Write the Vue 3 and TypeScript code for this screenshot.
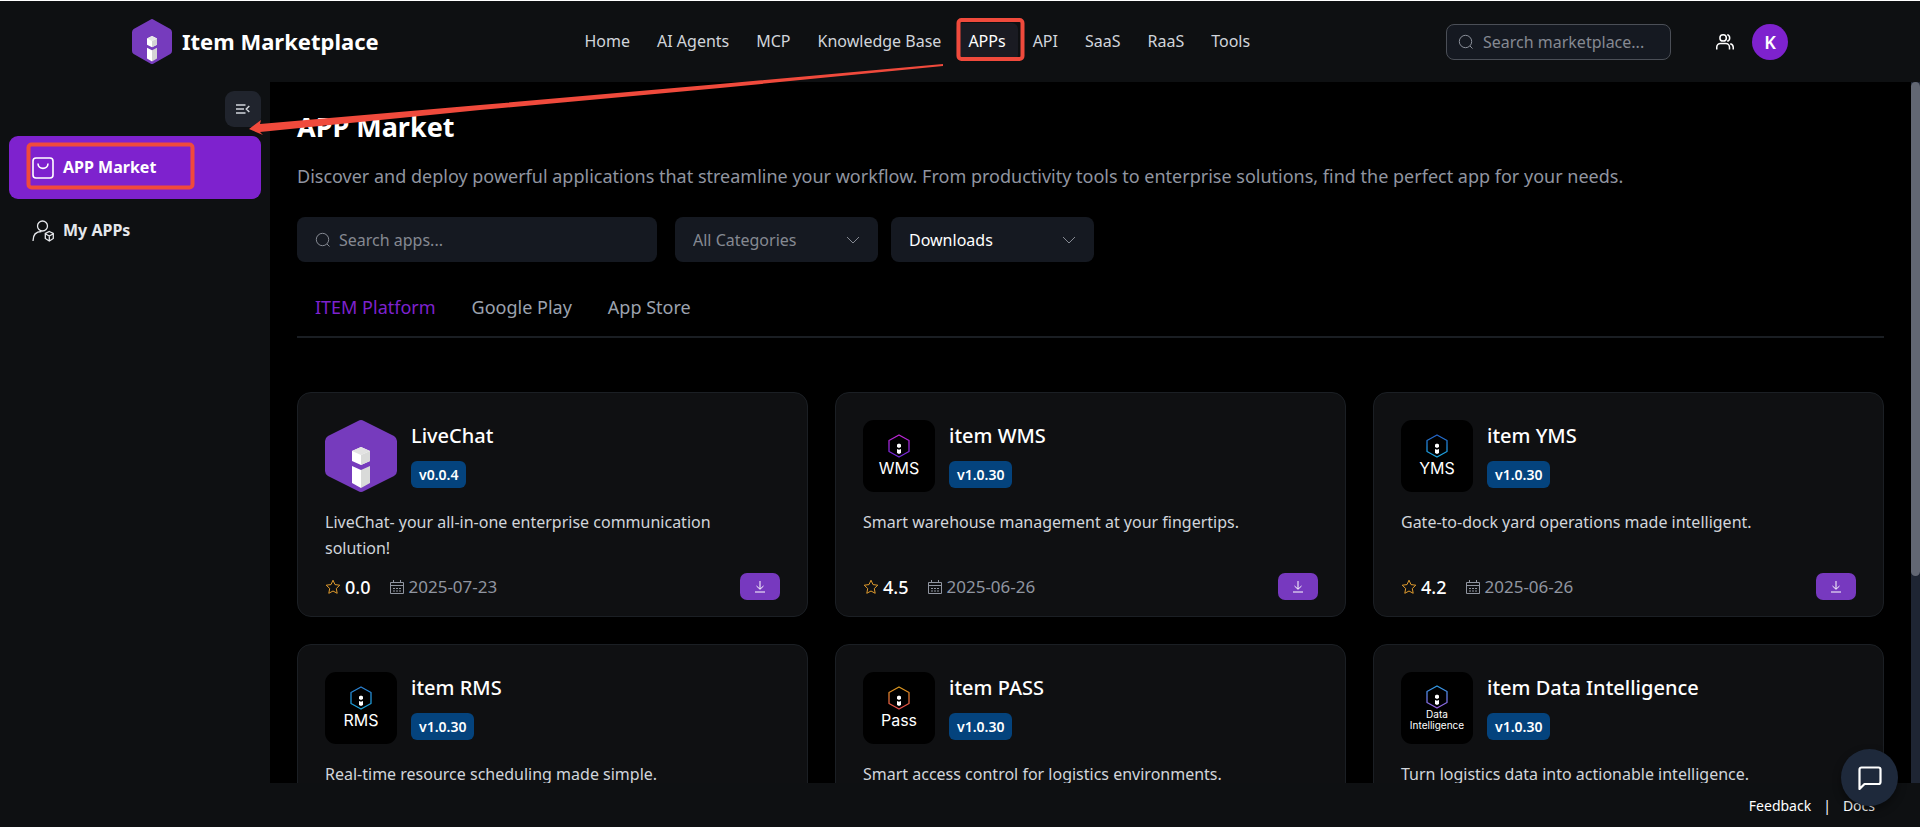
<script setup lang="ts">
import { ref } from 'vue'

interface MarketApp {
  name: string
  version: string
  description: string
  rating?: string
  date?: string
  label: string[]
  colors: [string, string]
}

const navItems = ['Home', 'AI Agents', 'MCP', 'Knowledge Base', 'APPs', 'API', 'SaaS', 'RaaS', 'Tools']
const tabs = ['ITEM Platform', 'Google Play', 'App Store']
const activeTab = ref('ITEM Platform')
const siteQuery = ref('')
const appQuery = ref('')
const category = ref('all')
const sortBy = ref('downloads')

const apps: MarketApp[] = [
  { name: 'LiveChat', version: 'v0.0.4', description: 'LiveChat- your all-in-one enterprise communication solution!', rating: '0.0', date: '2025-07-23', label: [], colors: ['#763bbd', '#763bbd'] },
  { name: 'item WMS', version: 'v1.0.30', description: 'Smart warehouse management at your fingertips.', rating: '4.5', date: '2025-06-26', label: ['WMS'], colors: ['#c026d3', '#6d28d9'] },
  { name: 'item YMS', version: 'v1.0.30', description: 'Gate-to-dock yard operations made intelligent.', rating: '4.2', date: '2025-06-26', label: ['YMS'], colors: ['#2563c9', '#1ba8e0'] },
  { name: 'item RMS', version: 'v1.0.30', description: 'Real-time resource scheduling made simple.', label: ['RMS'], colors: ['#2b7fd0', '#1aa3d8'] },
  { name: 'item PASS', version: 'v1.0.30', description: 'Smart access control for logistics environments.', label: ['Pass'], colors: ['#d99a1c', '#e5484d'] },
  { name: 'item Data Intelligence', version: 'v1.0.30', description: 'Turn logistics data into actionable intelligence.', label: ['Data', 'Intelligence'], colors: ['#2e9be6', '#9a5fe0'] },
]
</script>

<template>
  <div class="shell">
    <header class="topbar">
      <a class="brand" href="#">
        <svg class="brand-mark" viewBox="0 0 72 72" preserveAspectRatio="none" aria-hidden="true">
          <path d="M33 1Q36-1 39 1L69 16Q72 18 72 21V51Q72 54 69 56L39 71Q36 73 33 71L3 56Q0 54 0 51V21Q0 18 3 16Z" fill="#763bbd" />
          <path d="M27 31L36 27L45 31V41L36 45L27 41Z" fill="#fff" />
          <path d="M36 35L45 31V41L36 45Z" fill="#d4d4d4" />
          <path d="M27 31L36 27L45 31L36 35Z" fill="#e6e6e6" />
          <path d="M27 46L36 50V68L27 63Z" fill="#fff" />
          <path d="M36 50L45 46V63L36 68Z" fill="#d4d4d4" />
        </svg>
        <span>Item Marketplace</span>
      </a>
      <nav class="nav" aria-label="Main">
        <a v-for="item in navItems" :key="item" href="#" :class="{ current: item === 'APPs' }">{{ item }}</a>
      </nav>
      <div class="account">
        <label class="site-search">
          <svg viewBox="0 0 16 16" aria-hidden="true"><circle cx="7.5" cy="7.5" r="6.2" /><path d="M12 12L14.500 14.500" /></svg>
          <input v-model="siteQuery" type="text" placeholder="Search marketplace..." aria-label="Search marketplace" />
        </label>
        <button class="people" type="button" aria-label="Team">
          <svg viewBox="0 0 24 24" aria-hidden="true"><path d="M1 22v-3a5 5 0 0 1 5-5h7a5 5 0 0 1 5 5v3M15 2.200a4.600 4.600 0 0 1 0 8.800M19 14.200a5 5 0 0 1 4 4.800v3" /><circle cx="9.500" cy="6.500" r="4.300" /></svg>
        </button>
        <button class="avatar" type="button">K</button>
      </div>
    </header>

    <aside class="sidebar">
      <button class="collapse" type="button" aria-label="Collapse sidebar">
        <svg viewBox="0 0 14 10" aria-hidden="true"><path d="M0 1H9.500M0 5H8M0 9H9.500M13.300 2L10.300 5L13.300 8" /></svg>
      </button>
      <a class="side-link selected" href="#">
        <svg viewBox="0 0 22 22" aria-hidden="true"><rect x="1" y="1" width="20" height="20" rx="3" /><path d="M6 6.500C6 13 16 13 16 6.500" /></svg>
        <span>APP Market</span>
      </a>
      <a class="side-link" href="#">
        <svg class="thin" viewBox="0 0 22 22" aria-hidden="true"><circle cx="10.500" cy="6" r="5" /><path d="M1 21C1 15 4 11.500 9.500 11.500M17.300 11.500L21.300 13.500V18.500L17.300 21L13.300 18.500V13.500ZM13.300 13.800L17.300 16L21.300 13.800M17.300 16V21" /></svg>
        <span>My APPs</span>
      </a>
    </aside>

    <main class="content">
      <h1>APP Market</h1>
      <p class="lead">Discover and deploy powerful applications that streamline your workflow. From productivity tools to enterprise solutions, find the perfect app for your needs.</p>

      <div class="filters">
        <label class="field search">
          <svg viewBox="0 0 16 16" aria-hidden="true"><circle cx="7.5" cy="7.5" r="6.2" /><path d="M12 12L14.500 14.500" /></svg>
          <input v-model="appQuery" type="text" placeholder="Search apps..." aria-label="Search apps" />
        </label>
        <label class="field muted">
          <select v-model="category" aria-label="Category"><option value="all">All Categories</option></select>
          <svg viewBox="0 0 14 14" aria-hidden="true"><path d="M1 4L7 10L13 4" /></svg>
        </label>
        <label class="field">
          <select v-model="sortBy" aria-label="Sort by"><option value="downloads">Downloads</option></select>
          <svg viewBox="0 0 14 14" aria-hidden="true"><path d="M1 4L7 10L13 4" /></svg>
        </label>
      </div>

      <div class="tabs" role="tablist">
        <button v-for="tab in tabs" :key="tab" type="button" role="tab" :aria-selected="tab === activeTab" :class="{ on: tab === activeTab }" @click="activeTab = tab">{{ tab }}</button>
      </div>

      <section class="grid">
        <article v-for="(app, i) in apps" :key="app.name" class="card">
          <div class="card-head">
            <svg v-if="!app.label.length" class="tile-mark" viewBox="0 0 72 72" aria-hidden="true">
              <path d="M33 1Q36-1 39 1L69 16Q72 18 72 21V51Q72 54 69 56L39 71Q36 73 33 71L3 56Q0 54 0 51V21Q0 18 3 16Z" fill="#763bbd" />
              <path d="M27 31L36 27L45 31V41L36 45L27 41Z" fill="#fff" />
              <path d="M36 35L45 31V41L36 45Z" fill="#d9dad9" />
              <path d="M27 31L36 27L45 31L36 35Z" fill="#e2e2e2" />
              <path d="M27 46L36 50V68L27 63Z" fill="#fff" />
              <path d="M36 50L45 46V63L36 68Z" fill="#d9dad9" />
            </svg>
            <div v-else class="tile" :class="{ dense: app.label.length > 1 }">
              <svg viewBox="0 0 22 24" aria-hidden="true">
                <defs>
                  <linearGradient :id="`edge-${i}`" x1="0" y1="0" x2="0" y2="1">
                    <stop offset="0" :stop-color="app.colors[0]" />
                    <stop offset="1" :stop-color="app.colors[1]" />
                  </linearGradient>
                </defs>
                <path d="M11 1L21 6.500V17.500L11 23L1 17.500V6.500Z" fill="none" :stroke="`url(#edge-${i})`" stroke-width="1.300" stroke-linejoin="round" />
                <path d="M9 10.500L11 9.500L13 10.500V13L11 14L9 13ZM9 15L11 15.800L13 15V19L11 20L9 19Z" fill="#fff" />
              </svg>
              <span v-for="word in app.label" :key="word">{{ word }}</span>
            </div>
            <div class="titles">
              <h2>{{ app.name }}</h2>
              <span class="version">{{ app.version }}</span>
            </div>
          </div>
          <p class="description">{{ app.description }}</p>
          <div v-if="app.rating" class="meta">
            <svg class="star" viewBox="0 0 16 16" aria-hidden="true"><path d="M8 1.200L10 5.600L14.800 6.200L11.300 9.500L12.200 14.300L8 12L3.800 14.300L4.700 9.500L1.200 6.200L6 5.600Z" /></svg>
            <strong>{{ app.rating }}</strong>
            <svg class="calendar" viewBox="0 0 14 14" aria-hidden="true"><path d="M.5 2.500H13.500V13.500H.5ZM.5 5.500H13.500M3.500 0V3M10.500 0V3" /><path d="M3 8.500H11M3 11H11" stroke-dasharray="2 1" /></svg>
            <time>{{ app.date }}</time>
            <button type="button" :aria-label="`Download ${app.name}`">
              <svg viewBox="0 0 12 12" aria-hidden="true"><path d="M6 0V8M2.500 5L6 8.300L9.500 5M1 11H11" /></svg>
            </button>
          </div>
        </article>
      </section>
    </main>
    <div class="scroll-track" aria-hidden="true"><div class="scroll-thumb"></div></div>

    <footer class="footer">
      <a href="#">Feedback</a><span>|</span><a href="#">Docs</a>
    </footer>

    <button class="chat" type="button" aria-label="Open chat">
      <svg viewBox="0 0 24 24" aria-hidden="true"><path d="M1.500 23V3.500A2 2 0 0 1 3.500 1.500H20.500A2 2 0 0 1 22.500 3.500V16A2 2 0 0 1 20.500 18H6.500Z" /></svg>
    </button>

    <svg class="markup" width="1040" height="200" viewBox="0 0 1040 200" aria-hidden="true">
      <path d="M249 129L261 120L260 124L480 105L720 84L943 64V66L720 88L480 110L260 132L263 135Z" fill="#f04a3c" />
      <rect x="958.500" y="20" width="64" height="39" rx="3" />
      <rect x="28.500" y="144.500" width="164" height="43" rx="3" />
    </svg>
  </div>
</template>

<style>
html, body { background: #0e1012; }
body { margin: 0; }
</style>

<style scoped>
* { box-sizing: border-box; }
.shell {
  position: relative;
  display: grid;
  grid-template: 82px minmax(0, 1fr) 44px / 270px minmax(0, 1fr) 9px;
  height: 100vh;
  overflow: hidden;
  background: #0e1012;
  color: #fff;
  font-family: "Noto Sans", "Open Sans", sans-serif;
  font-size: 16px;
}
a { color: inherit; text-decoration: none; }
button, input, select { font: inherit; color: inherit; border: 0; padding: 0; background: none; outline: 0; }
svg { display: block; flex: none; fill: none; stroke: currentColor; }
.brand-mark, .tile-mark, .tile svg { stroke: none; }

.topbar {
  grid-column: 1 / -1;
  display: flex;
  align-items: center;
  justify-content: space-between;
  padding: 0 132px;
  border-top: 1px solid #fff;
}
.brand { display: flex; align-items: center; gap: 10px; margin-right: 10px; font-size: 22px; line-height: 28px; font-weight: 700; }
.brand span { padding-bottom: 2px; }
.brand-mark { width: 40px; height: 45px; }
.nav { display: flex; gap: 3px; color: #d1d5db; }
.nav a { padding: 0 12px 2px; line-height: 36px; border-radius: 6px; }
.nav .current { background: #1a1b22; color: #fff; }
.account { display: flex; align-items: center; justify-content: flex-end; }
.site-search {
  display: flex; align-items: center; gap: 9px;
  width: 225px; height: 36px; padding: 0 11px;
  border: 1px solid #4b4f57; border-radius: 8px; background: #151921; color: #8a8f99;
}
.site-search svg { width: 16px; height: 16px; }
input { width: 100%; min-width: 0; }
input::placeholder { color: #858992; opacity: 1; }
.people { margin: 0 18px 0 45px; }
.people svg { width: 18px; height: 18px; stroke-width: 2; }
.avatar { width: 36px; height: 36px; border-radius: 50%; background: #7e22ce; font-size: 18px; font-weight: 600; }

.sidebar { display: flex; flex-direction: column; padding: 9px; }
.collapse { display: flex; align-items: center; justify-content: center; align-self: flex-end; width: 36px; height: 36px; margin-bottom: 9px; border-radius: 9px; background: #20242d; color: #d1d5db; }
.collapse svg { width: 14px; height: 10px; stroke-width: 1.5; }
.side-link { display: flex; align-items: center; gap: 9px; height: 63px; padding: 0 23px; border-radius: 9px; font-weight: 700; color: #e5e7eb; }
.side-link span { padding-bottom: 2px; }
.side-link svg { width: 22px; height: 22px; stroke-width: 1.6; }
.side-link .thin { stroke-width: 1.3; }
.selected { background: #7e22ce; color: #fff; }

.content { overflow: hidden; padding: 27px; background: #000; }
h1 { margin: 0; font-size: 27px; line-height: 36px; font-weight: 700; }
.lead { margin: 18px 0 27px; font-size: 18px; line-height: 27px; color: #9095a0; }
.filters { display: flex; gap: 13px; }
.field { display: flex; align-items: center; width: 203px; height: 45px; padding: 0 18px; border-radius: 8px; background: #151921; }
.field svg { width: 14px; height: 14px; color: #858992; }
.field.search { width: 360px; gap: 8px; margin-right: 5px; }
.field.search svg { width: 16px; height: 16px; }
.muted { color: #858992; }
select { flex: 1; min-width: 0; appearance: none; }
.tabs { display: flex; gap: 36px; margin: 16px 0 54px; padding: 0 18px; border-bottom: 2px solid #1a1e23; }
.tabs button { font-size: 18px; line-height: 58px; color: #9ca3af; }
.tabs .on { color: #7e22ce; }

.grid { display: grid; grid-template-columns: repeat(3, minmax(0, 1fr)); gap: 27px; }
.card { height: 225px; padding: 27px; border: 1px solid #1b1f24; border-radius: 14px; background: #0f1012; }
.card-head { display: flex; gap: 14px; }
.tile, .tile-mark { width: 72px; height: 72px; }
.tile { display: flex; flex: none; flex-direction: column; align-items: center; padding-top: 14px; border-radius: 11px; background: #000; font: 16px/20px Inter, sans-serif; }
.tile svg { width: 22px; height: 24px; }
.dense { padding-top: 13px; font-size: 10px; line-height: 11px; }
h2 { margin: 0; font-size: 20px; line-height: 31px; font-weight: 500; }
.version { display: inline-block; margin-top: 10px; padding: 0 8px; border-radius: 6px; background: #04437d; font-size: 14px; line-height: 27px; font-weight: 600; }
.description { height: 52px; margin: 17px 0 12px; padding-right: 9px; font-size: 16px; line-height: 26px; color: #d1d5db; }
.meta { display: flex; align-items: center; height: 27px; line-height: 24px; color: #9095a0; }
.star { width: 16px; height: 16px; color: #e09b2d; }
strong { margin: 0 19px 0 4px; font-size: 18px; font-weight: 500; color: #fff; }
time { font-size: 17px; }
.calendar { width: 14px; height: 14px; margin-right: 5px; }
.meta button { display: flex; align-items: center; justify-content: center; width: 40px; height: 27px; margin-left: auto; border-radius: 7px; background: #7739bf; color: #fff; }
.meta button svg { width: 12px; height: 12px; }

.scroll-track { background: #1e2533; }
.scroll-thumb { height: 70.4%; border-radius: 5px; background: #626773; }
.footer { grid-column: 1 / -1; display: flex; align-items: center; justify-content: flex-end; gap: 12px; padding: 0 45px; font-size: 14px; }
.chat { position: absolute; right: 22px; bottom: 21px; display: flex; align-items: center; justify-content: center; width: 57px; height: 57px; border-radius: 50%; background: #1e293b; box-shadow: 0 4px 8px rgba(0, 0, 0, .4); }
.chat svg { width: 24px; height: 24px; stroke-width: 2.2; stroke-linejoin: round; }
.markup { position: absolute; left: 0; top: 0; pointer-events: none; stroke: none; }
.markup rect { stroke: #f04a3c; stroke-width: 4; }
</style>
